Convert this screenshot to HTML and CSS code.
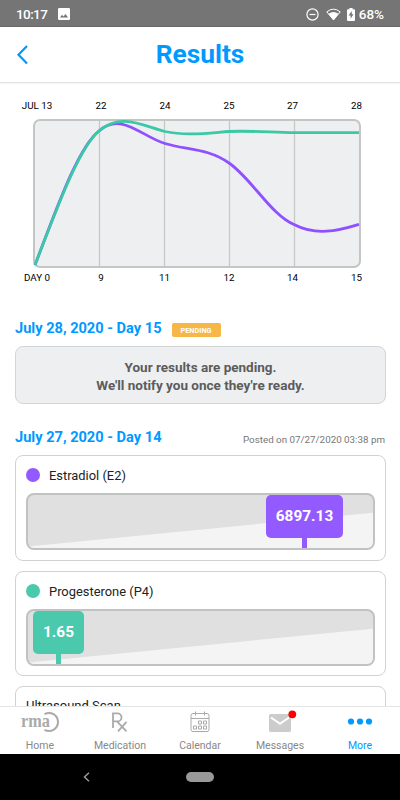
FILE: index.html
```html
<!DOCTYPE html>
<html lang="en">
<head>
    <meta charset="UTF-8">
    <meta name="viewport" content="width=device-width, initial-scale=1.0">
    <title>Results</title>
    <link rel="stylesheet" href="styles.css">
</head>
<body>
    <div class="status-bar">
        <span class="time">10:17</span>
        <svg class="picture" width="12" height="12" viewBox="0 0 12 12">
            <rect width="12" height="12" rx="1.3" fill="#fff"/>
            <path d="M2 9.5 4 6.8 5.5 8.4 7.5 6 10 9.5Z" fill="#757575"/>
        </svg>
        <svg class="dnd" width="13" height="13" viewBox="0 0 13 13" fill="none" stroke="#fff" stroke-width="1.2">
            <circle cx="6.5" cy="6.5" r="5.6"/>
            <path d="M3.5 6.5h6"/>
        </svg>
        <svg class="wifi" width="15" height="13" viewBox="0 0 15 13">
            <path d="M.8 3.9Q7.5-1.6 14.2 3.9L7.5 12Z" fill="none" stroke="#fff"/>
            <path d="M2.6 5.8Q7.5 2.2 12.4 5.8L7.5 12Z" fill="#fff"/>
        </svg>
        <svg class="battery" width="8" height="13" viewBox="0 0 8 13">
            <path d="M2.4 0h3.2v1.2H7q1 0 1 1V12q0 1-1 1H1q-1 0-1-1V2.2q0-1 1-1h1.4Z" fill="#fff"/>
            <path d="M4.8 3 1.6 7.6h2v3.2L6.5 6.2H4.8Z" fill="#757575"/>
        </svg>
        <span class="percent">68%</span>
    </div>

    <header class="header">
        <svg class="back" width="12" height="20" viewBox="0 0 12 20">
            <path d="M11 1 2.5 9.8l8.5 8.8" fill="none" stroke="#0099ff" stroke-width="2.2"/>
        </svg>
        <h1>Results</h1>
    </header>

    <main class="content">
        <svg class="chart" width="400" height="200" viewBox="0 90 400 200">
            <rect class="chart-box" x="34" y="120" width="326" height="147" rx="6"/>
            <path class="grid-lines" d="M99.5 121v145M164.5 121v145M229.5 121v145M294.5 121v145"/>
            <path class="line estradiol" d="M35 265C56 210 78 147 99 131C121 111 142 137 165 143.5C186 150 208 148 229 163C251 178 272 216 294 224.5C316 236 337 231 359 224.3"/>
            <path class="line progesterone" d="M35 265C56 211 78 149 99 131C121 112 143 126 165 131.5C186 136 208 133 229 131.5C251 130.5 272 132.5 294 132.7L359 132.7"/>
            <g class="chart-labels">
                <text x="37" y="108.5">JUL 13</text>
                <text x="101" y="108.5">22</text>
                <text x="165" y="108.5">24</text>
                <text x="229" y="108.5">25</text>
                <text x="292.5" y="108.5">27</text>
                <text x="356.5" y="108.5">28</text>
                <text x="37" y="280.5">DAY 0</text>
                <text x="101" y="280.5">9</text>
                <text x="164.5" y="280.5">11</text>
                <text x="229" y="280.5">12</text>
                <text x="292.5" y="280.5">14</text>
                <text x="356.5" y="280.5">15</text>
            </g>
        </svg>

        <div class="day-row">
            <h2>July 28, 2020 - Day 15</h2>
            <span class="badge">PENDING</span>
        </div>
        <div class="pending">Your results are pending.<br>We'll notify you once they're ready.</div>

        <div class="day-row posted-row">
            <h2>July 27, 2020 - Day 14</h2>
            <span class="posted">Posted on 07/27/2020 03:38 pm</span>
        </div>

        <div class="card">
            <div class="card-title"><span class="dot purple"></span>Estradiol (E2)</div>
            <div class="range">
                <svg class="slope" viewBox="0 0 346 54" preserveAspectRatio="none"><path d="M0 52.5 346 18V54H0Z"/></svg>
                <div class="marker purple estradiol-marker">6897.13</div>
            </div>
        </div>

        <div class="card second">
            <div class="card-title"><span class="dot green"></span>Progesterone (P4)</div>
            <div class="range">
                <svg class="slope" viewBox="0 0 346 54" preserveAspectRatio="none"><path d="M0 52.5 346 18V54H0Z"/></svg>
                <div class="marker green progesterone-marker">1.65</div>
            </div>
        </div>

        <div class="card scan">Ultrasound Scan</div>
    </main>

    <nav class="tabs">
        <a class="tab">
            <svg width="40" height="22" viewBox="0 0 40 22">
                <text class="rma" x="1" y="15.5" textLength="29" lengthAdjust="spacingAndGlyphs">rma</text>
                <path d="M24.5 3.2A9 9 0 1 1 24.5 18.8" fill="none" stroke="#aaa" stroke-width="2"/>
            </svg>
            <span>Home</span>
        </a>
        <a class="tab">
            <svg width="40" height="22" viewBox="0 0 40 22" fill="none" stroke="#aaa" stroke-width="1.8">
                <path d="M13 17V2.4h4.5a4 4 0 0 1 0 8H13M17 10.4l9.5 10M26.5 10.8l-8.5 9.6"/>
            </svg>
            <span>Medication</span>
        </a>
        <a class="tab">
            <svg width="40" height="22" viewBox="0 0 40 22" fill="none" stroke="#aaa">
                <rect x="11" y="2.5" width="18" height="18" rx="2"/>
                <path d="M11 7.5h18M15.5.5v4M24.5.5v4"/>
                <path d="M18.5 10h3v3h-3zM23.5 10h3v3h-3zM13.5 15h3v3h-3zM18.5 15h3v3h-3zM23.5 15h3v3h-3z"/>
            </svg>
            <span>Calendar</span>
        </a>
        <a class="tab">
            <svg width="40" height="22" viewBox="0 0 40 22">
                <rect x="9" y="3" width="22" height="18" rx="1.5" fill="#ccc"/>
                <path d="M11 6.5l9 6.3 9-6.3" fill="none" stroke="#fff" stroke-width="2"/>
                <circle cx="32.3" cy="3.3" r="3.9" fill="#f00"/>
            </svg>
            <span>Messages</span>
        </a>
        <a class="tab active">
            <svg width="40" height="22" viewBox="0 0 40 22" fill="#0099ff">
                <circle cx="11" cy="10.5" r="3.1"/>
                <circle cx="20" cy="10.5" r="3.1"/>
                <circle cx="29" cy="10.5" r="3.1"/>
            </svg>
            <span>More</span>
        </a>
    </nav>

    <div class="system-nav">
        <svg width="8" height="10" viewBox="0 0 8 10">
            <path d="M6 .8 1.5 5 6 9.2" fill="none" stroke="#999" stroke-width="1.5"/>
        </svg>
        <span class="home-pill"></span>
    </div>
</body>
</html>
```
FILE: styles.css
```css
* { box-sizing: border-box; }
body {
    display: flex;
    flex-direction: column;
    height: 800px;
    margin: 0;
    overflow: hidden;
    font-family: Roboto, "Liberation Sans", sans-serif;
    background: #fff;
    color: #222;
}
.status-bar {
    display: flex;
    flex: none;
    align-items: center;
    height: 27px;
    padding: 2px 16px 0;
    background: #757575;
    border-bottom: 1px solid #686868;
    color: #fff;
    font-weight: 500;
}
.time { width: 42px; font-size: 13.5px; letter-spacing: -0.6px; }
.dnd { margin-left: auto; }
.wifi { margin-left: 7px; }
.battery { margin: 0 4px 0 6px; }
.percent { font-size: 13.5px; }

.header {
    display: grid;
    grid-template-columns: 1fr auto 1fr;
    flex: none;
    align-items: center;
    height: 56px;
    padding: 0 16px;
    border-bottom: 1px solid #e4e4e4;
    box-shadow: 0 1px 1px #f5f5f5;
}
h1 {
    margin: -1px 0 0;
    color: #0099ff;
    font-size: 26.3px;
    font-weight: 700;
}

.content {
    flex: 1;
    min-height: 0;
    padding-top: 7px;
    overflow: hidden;
}
.chart { display: block; }
.chart-box { fill: #edeff1; stroke: #c4c6c6; stroke-width: 2; }
.grid-lines { stroke: #c8c8c8; stroke-width: 1.3; }
.line { fill: none; stroke-width: 2.8; }
.estradiol { stroke: #8f51ff; }
.progesterone { stroke: #3bc8a5; }
.chart-labels { font-size: 9.8px; text-anchor: middle; }

.day-row {
    display: flex;
    align-items: center;
    height: 20px;
    margin: 28px 15px 0;
}
h2 {
    margin: -1px 0 0;
    color: #0099ff;
    font-size: 14.6px;
    font-weight: 700;
}
.badge {
    width: 49px;
    height: 14px;
    margin: 3px 0 0 10px;
    border-radius: 2px;
    background: #f7b748;
    color: #fff;
    font-size: 7.3px;
    font-weight: 700;
    line-height: 15px;
    text-align: center;
}
.pending {
    height: 58px;
    margin: 8px 14px 0 15px;
    padding-top: 11px;
    border: 1px solid #d2d4d5;
    border-radius: 8px;
    background: #edeff1;
    color: #5c5c5c;
    font-size: 13.5px;
    font-weight: 700;
    line-height: 18px;
    text-align: center;
}
.posted-row { justify-content: space-between; margin-top: 23px; }
.posted { margin-top: 5px; color: #777; font-size: 9.8px; }

.card {
    height: 106px;
    margin: 8px 14px 0 15px;
    padding: 10px;
    border: 1px solid #d2d2d2;
    border-radius: 8px;
}
.card.second { height: 105px; margin-top: 10px; }
.card-title {
    display: flex;
    align-items: center;
    height: 18px;
    font-size: 12.9px;
}
.dot {
    width: 14px;
    height: 14px;
    margin-right: 9px;
    border-radius: 50%;
}
.purple { background: #935aff; }
.green { background: #4bc9ad; }
.range {
    position: relative;
    height: 57px;
    margin-top: 9px;
    overflow: hidden;
    border: 2px solid #c1c2c2;
    border-radius: 8px;
    background: #e0e0e0;
}
.slope { display: block; width: 100%; height: 100%; fill: #f4f4f4; }
.marker {
    position: absolute;
    top: 0;
    height: 43px;
    border-radius: 5px;
    color: #fff;
    font-size: 15.4px;
    font-weight: 700;
    line-height: 43px;
    text-align: center;
}
.marker::after {
    content: "";
    position: absolute;
    top: 42px;
    left: 50%;
    width: 5px;
    height: 12px;
    margin-left: -2.5px;
    background: inherit;
}
.estradiol-marker { left: 238px; width: 77px; }
.progesterone-marker { left: 5px; width: 51px; }
.scan { margin-top: 10px; padding: 11px 10px; font-size: 13px; }

.tabs {
    display: flex;
    flex: none;
    height: 48px;
    border-top: 1px solid #e4e4e4;
    background: #fff;
}
.tab {
    display: flex;
    flex: 1;
    flex-direction: column;
    align-items: center;
    padding-top: 4px;
    color: #888;
    font-size: 10.5px;
}
.tab svg { overflow: visible; }
.tab span { margin-top: 6px; }
.tab.active { color: #0099ff; }
.rma {
    fill: #aaa;
    font-family: "Liberation Serif", serif;
    font-size: 19px;
    font-weight: 700;
}

.system-nav {
    display: grid;
    grid-template-columns: 1fr auto 1fr;
    flex: none;
    align-items: center;
    height: 46px;
    padding: 0 83px;
    background: #000;
}
.home-pill {
    width: 28px;
    height: 10px;
    border-radius: 5px;
    background: #999;
}
```
